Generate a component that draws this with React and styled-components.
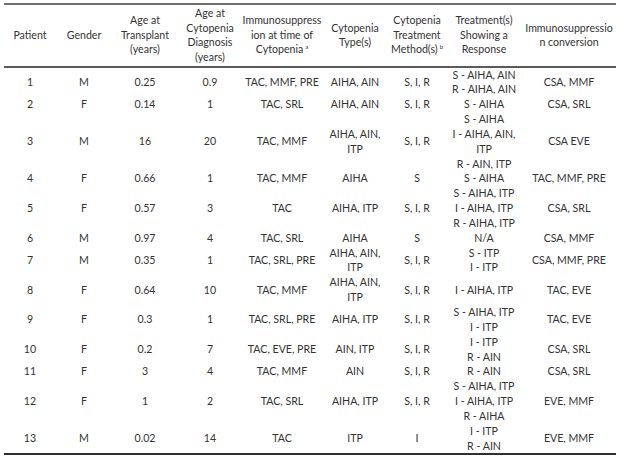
import React from "react";
import styled, { createGlobalStyle } from "styled-components";

const GlobalStyle = createGlobalStyle`
  html, body {
    margin: 0;
    padding: 0;
    background: #ffffff;
  }
`;

const Page = styled.div`
  width: 624px;
  height: 460px;
  box-sizing: border-box;
  padding: 3px 0 0 4px;
  background: #ffffff;
  overflow: hidden;
`;

const Table = styled.table`
  width: 612px;
  table-layout: fixed;
  border-collapse: separate;
  border-spacing: 0;
  font-family: Lato, "Liberation Sans", sans-serif;
  font-size: 10.6px;
  color: #333333;
`;

const Col = styled.col`
  width: ${({ w }) => w}px;
`;

const Head = styled.th`
  font-weight: 400;
  text-align: center;
  vertical-align: middle;
  white-space: nowrap;
  line-height: 14.5px;
  padding: 1px 0 1.5px;
  border-top: 2px solid #6e6e6e;
  border-bottom: 2px solid #5a5a5a;
`;

const Cell = styled.td`
  text-align: center;
  vertical-align: middle;
  white-space: nowrap;
  line-height: 14.85px;
  padding: 0;
  border-bottom: ${({ last }) => (last ? "2px solid #2f2f2f" : "none")};
`;

const Line = styled.div`
  display: block;
`;

const Sup = styled.sup`
  font-size: 6px;
  line-height: 0;
  vertical-align: 4px;
  margin-left: 2px;
`;

const widths = [52, 56, 66, 64, 80, 66, 58, 76, 94];

const headers = [
  ["Patient"],
  ["Gender"],
  ["Age at", "Transplant", "(years)"],
  ["Age at", "Cytopenia", "Diagnosis", "(years)"],
  ["Immunosuppress", "ion at time of", ["Cytopenia", "a"]],
  ["Cytopenia", "Type(s)"],
  ["Cytopenia", "Treatment", ["Method(s)", "b"]],
  ["Treatment(s)", "Showing a", "Response"],
  ["Immunosuppressio", "n conversion"],
];

const rows = [
  ["1", "M", "0.25", "0.9", "TAC, MMF, PRE", "AIHA, AIN", "S, I, R", ["S - AIHA, AIN", "R - AIHA, AIN"], "CSA, MMF"],
  ["2", "F", "0.14", "1", "TAC, SRL", "AIHA, AIN", "S, I, R", ["S - AIHA"], "CSA, SRL"],
  ["3", "M", "16", "20", "TAC, MMF", ["AIHA, AIN,", "ITP"], "S, I, R", ["S - AIHA", "I - AIHA, AIN,", "ITP", "R - AIN, ITP"], "CSA EVE"],
  ["4", "F", "0.66", "1", "TAC, MMF", "AIHA", "S", ["S - AIHA"], "TAC, MMF, PRE"],
  ["5", "F", "0.57", "3", "TAC", "AIHA, ITP", "S, I, R", ["S - AIHA, ITP", "I - AIHA, ITP", "R - AIHA, ITP"], "CSA, SRL"],
  ["6", "M", "0.97", "4", "TAC, SRL", "AIHA", "S", ["N/A"], "CSA, MMF"],
  ["7", "M", "0.35", "1", "TAC, SRL, PRE", ["AIHA, AIN,", "ITP"], "S, I, R", ["S - ITP", "I - ITP"], "CSA, MMF, PRE"],
  ["8", "F", "0.64", "10", "TAC, MMF", ["AIHA, AIN,", "ITP"], "S, I, R", ["I - AIHA, ITP"], "TAC, EVE"],
  ["9", "F", "0.3", "1", "TAC, SRL, PRE", "AIHA, ITP", "S, I, R", ["S - AIHA, ITP", "I - ITP"], "TAC, EVE"],
  ["10", "F", "0.2", "7", "TAC, EVE, PRE", "AIN, ITP", "S, I, R", ["I - ITP", "R - AIN"], "CSA, SRL"],
  ["11", "F", "3", "4", "TAC, MMF", "AIN", "S, I, R", ["R - AIN"], "CSA, SRL"],
  ["12", "F", "1", "2", "TAC, SRL", "AIHA, ITP", "S, I, R", ["S - AIHA, ITP", "I - AIHA, ITP", "R - AIHA"], "EVE, MMF"],
  ["13", "M", "0.02", "14", "TAC", "ITP", "I", ["I - ITP", "R - AIN"], "EVE, MMF"],
];

// a cell value is either a string or a list of lines
function Lines({ value }) {
  const list = Array.isArray(value) ? value : [value];
  return list.map((line, i) =>
    Array.isArray(line) ? (
      <Line key={i}>
        {line[0]}
        <Sup>{line[1]}</Sup>
      </Line>
    ) : (
      <Line key={i}>{line}</Line>
    )
  );
}

export default function App() {
  return (
    <>
      <GlobalStyle />
      <Page>
        <Table>
          <colgroup>
            {widths.map((w, i) => (
              <Col key={i} w={w} />
            ))}
          </colgroup>
          <thead>
            <tr>
              {headers.map((h, i) => (
                <Head key={i}>
                  <Lines value={h} />
                </Head>
              ))}
            </tr>
          </thead>
          <tbody>
            {rows.map((row, r) => (
              <tr key={r}>
                {row.map((value, c) => (
                  <Cell key={c} last={r === rows.length - 1}>
                    <Lines value={value} />
                  </Cell>
                ))}
              </tr>
            ))}
          </tbody>
        </Table>
      </Page>
    </>
  );
}
